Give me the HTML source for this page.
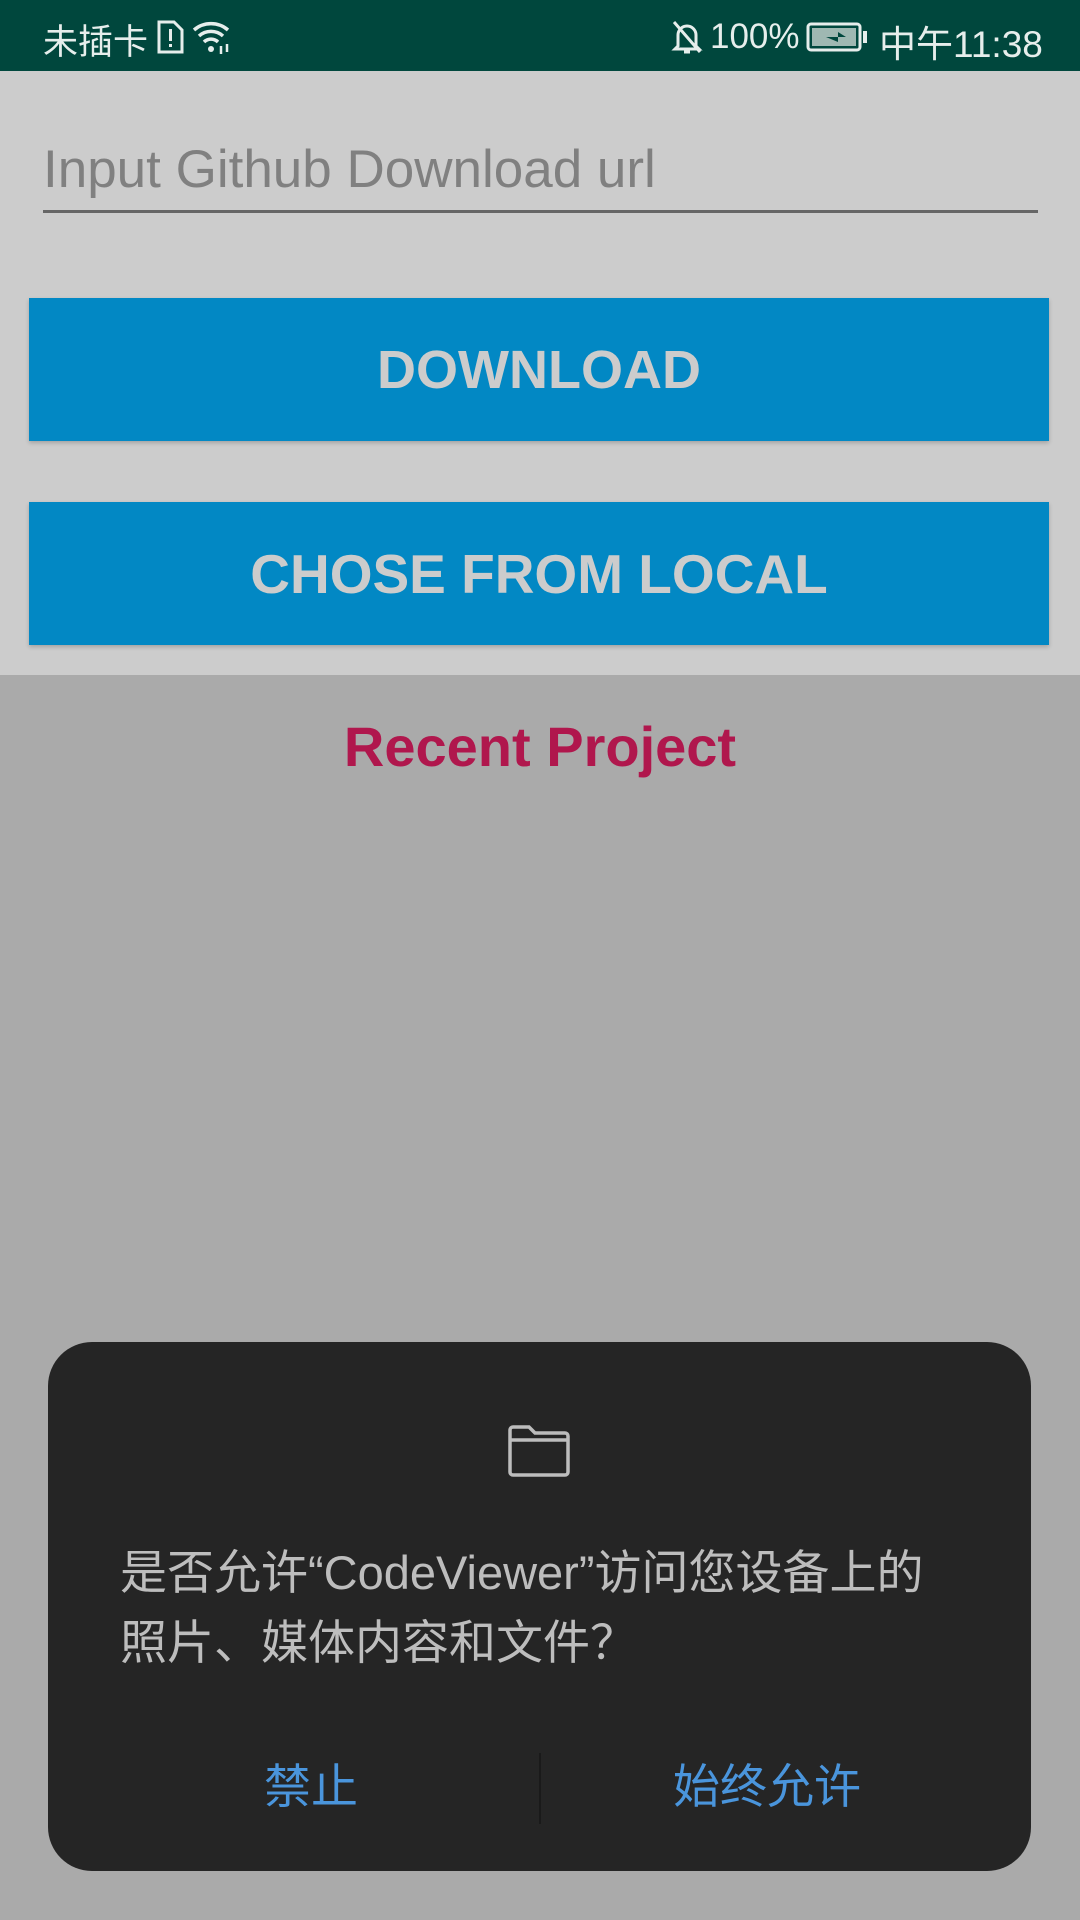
<!DOCTYPE html>
<html><head><meta charset="utf-8"><style>
*{margin:0;padding:0;box-sizing:border-box}
body{width:1080px;height:1920px;position:relative;overflow:hidden;background:#aaaaaa;font-family:"Liberation Sans","Noto Sans CJK SC",sans-serif}
.abs{position:absolute}
#sb{left:0;top:0;width:1080px;height:71px;background:#00473d;color:#e6eeec;font-size:35px}
#top{left:0;top:71px;width:1080px;height:604px;background:#cccccc}
.btn{left:29px;width:1020px;height:143px;background:#0288c4;color:#cccccc;font-weight:bold;display:flex;align-items:center;justify-content:center;box-shadow:0 2px 4px rgba(0,0,0,.2)}
#dlg{left:48px;top:1342px;width:983px;height:529px;background:#252525;border-radius:44px}
.t{color:#bdbdbd;font-size:47px;left:120px;white-space:nowrap}
.b{color:#4a95dc;font-size:47px;top:1748px;white-space:nowrap}
</style></head><body>
<div id="sb" class="abs">
 <div class="abs" style="left:43px;top:14px">未插卡</div>
 <svg class="abs" style="left:155px;top:20px" width="30" height="34" viewBox="0 0 30 34"><path d="M4 2h15l8 8v22H4z" fill="none" stroke="#e6eeec" stroke-width="3"/><rect x="14" y="9" width="3" height="12" fill="#e6eeec"/><rect x="14" y="24" width="3" height="3" fill="#e6eeec"/></svg>
 <svg class="abs" style="left:191px;top:18px" width="42" height="36" viewBox="0 0 42 36"><path d="M3 12a26 26 0 0 1 34 0M8 18a18 18 0 0 1 24 0M13 24a10 10 0 0 1 14 0" fill="none" stroke="#e6eeec" stroke-width="3.5"/><circle cx="20" cy="31" r="3" fill="#e6eeec"/><path d="M30 28v8M36 26v8" stroke="#e6eeec" stroke-width="2.5"/></svg>
 <svg class="abs" style="left:670px;top:18px" width="34" height="38" viewBox="0 0 34 38"><path d="M8 28V17a9 9 0 0 1 18 0v11l3 3H5z" fill="none" stroke="#e6eeec" stroke-width="3"/><path d="M4 4l26 30" stroke="#e6eeec" stroke-width="3"/><path d="M14 34h6" stroke="#e6eeec" stroke-width="3"/></svg>
 <div class="abs" style="left:710px;top:17px">100%</div>
 <svg class="abs" style="left:806px;top:22px" width="62" height="30" viewBox="0 0 62 30"><rect x="2" y="2" width="52" height="26" rx="3" fill="none" stroke="#e6eeec" stroke-width="3"/><rect x="6" y="6" width="44" height="18" fill="#9fb8b2"/><path d="M20 15h20l-8-5v10z" fill="#00473d"/><rect x="57" y="9" width="4" height="12" fill="#e6eeec"/></svg>
 <div class="abs" style="left:879px;top:14px;font-size:37px">中午11:38</div>
</div>
<div id="top" class="abs"></div>
<div class="abs" style="left:43px;top:139px;font-size:53px;color:#808080">Input Github Download url</div>
<div class="abs" style="left:43px;top:210px;width:995px;height:3px;background:#666"></div>
<div class="abs btn" style="top:298px;font-size:54px">DOWNLOAD</div>
<div class="abs btn" style="top:502px;font-size:55px">CHOSE FROM LOCAL</div>
<div class="abs" style="left:0;width:1080px;top:714px;text-align:center;color:#b0174d;font-weight:bold;font-size:56px">Recent Project</div>
<div id="dlg" class="abs"></div>
<svg class="abs" style="left:506px;top:1424px" width="66" height="54" viewBox="0 0 66 54"><path d="M4 6a3 3 0 0 1 3-3h16l6 6h30a3 3 0 0 1 3 3v36a3 3 0 0 1-3 3H7a3 3 0 0 1-3-3z M4 16h58" fill="none" stroke="#bdbdbd" stroke-width="3.5"/></svg>
<div class="abs t" style="top:1534px">是否允许“CodeViewer”访问您设备上的</div>
<div class="abs t" style="top:1604px">照片、媒体内容和文件？</div>
<div class="abs" style="left:539px;top:1753px;width:2px;height:71px;background:#1a1a1a"></div>
<div class="abs b" style="left:264px">禁止</div>
<div class="abs b" style="left:673px">始终允许</div>
</body></html>
